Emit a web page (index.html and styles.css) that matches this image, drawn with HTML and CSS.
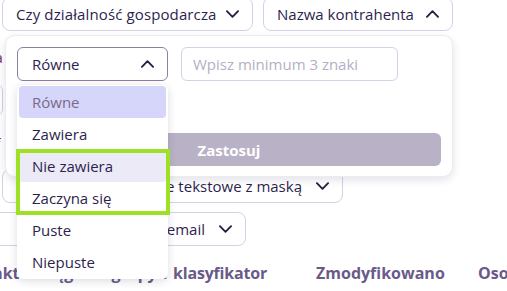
FILE: index.html
```html
<!DOCTYPE html>
<html lang="pl">
<head>
<meta charset="utf-8">
<link rel="stylesheet" href="styles.css">
</head>
<body>
<div class="page">
  <div class="filters">
    <div class="row row-top">
      <div class="btn btn-w1"><span class="wide">Czy działalność gospodarcza</span>
        <svg class="chev" viewBox="0 0 14 8"><polyline points="1,1 7,7 13,1"/></svg></div>
      <div class="btn btn-w2"><span>Nazwa kontrahenta</span>
        <svg class="chev" viewBox="0 0 14 8"><polyline points="1,7 7,1 13,7"/></svg></div>
    </div>
    <div class="row"><span class="cut-text red">Data</span></div>
    <div class="row"><div class="btn cut-btn"></div></div>
    <div class="row"><span class="cut-text f">Nip f</span></div>
    <div class="row">
      <div class="btn btn-mask"><span>Czy wypełnione pole tekstowe z maską</span>
        <svg class="chev" viewBox="0 0 14 8"><polyline points="1,1 7,7 13,1"/></svg></div>
    </div>
    <div class="row">
      <div class="btn btn-email"><span>Telefon albo adres email</span>
        <svg class="chev" viewBox="0 0 14 8"><polyline points="1,1 7,7 13,1"/></svg></div>
    </div>
  </div>
  <div class="thead">
    <span class="th th1">Kontaktowe</span>
    <span class="th th2">Księgowe grupy i klasyfikator</span>
    <span class="th th3">Zmodyfikowano</span>
    <span class="th th4">Osoba</span>
  </div>

  <div class="popover">
    <div class="pop-row">
      <div class="select"><span>Równe</span>
        <svg class="chev" viewBox="0 0 14 8"><polyline points="1,7 7,1 13,7"/></svg></div>
      <div class="input">Wpisz minimum 3 znaki</div>
    </div>
    <div class="apply">Zastosuj</div>
  </div>

  <div class="listbox">
    <div class="opt selected">Równe</div>
    <div class="opt">Zawiera</div>
    <div class="opt hover">Nie zawiera</div>
    <div class="opt">Zaczyna się</div>
    <div class="opt">Puste</div>
    <div class="opt">Niepuste</div>
    <div class="mark"></div>
  </div>
</div>
</body>
</html>
```
FILE: styles.css
```css
* { box-sizing: border-box; }
html, body { margin: 0; padding: 0; background: #fff; }
body {
  font-family: "Open Sans", "Noto Sans", sans-serif;
  font-size: 15px;
  color: #2d1f4e;
  overflow: hidden;
  width: 507px;
  height: 291px;
}
.page { position: relative; width: 507px; height: 291px; overflow: hidden; }

.filters { display: flex; flex-direction: column; gap: 9px; margin-top: -3px; }
.row { display: flex; gap: 10px; height: 34px; align-items: center; padding-left: 2px; }

.btn {
  display: flex; align-items: center; justify-content: space-between;
  height: 34px; border: 1px solid #d4d1e7; border-radius: 8px;
  padding: 0 13px 0 13px; background: #fff; white-space: nowrap;
  color: #2d1f4e; flex: none;
}
.wide { letter-spacing: 0.12px; }
.btn-w1 { width: 251px; }
.btn-w2 { width: 190px; }
.btn-mask { width: 341px; justify-content: flex-end; gap: 14px; overflow: hidden; }
.btn-email { width: 290px; margin-left: -46px; justify-content: flex-end; gap: 14px; overflow: hidden; }
.cut-btn { width: 40px; margin-left: -39px; }
.cut-text { margin-left: -32px; white-space: nowrap; }
.cut-text.red { color: #7b2f5c; }
.cut-text.f { color: #2c3c8c; margin-left: -35px; }

.chev { width: 13px; height: 8px; flex: none; }
.chev polyline { fill: none; stroke: #2a1a44; stroke-width: 2; stroke-linecap: round; stroke-linejoin: round; }

.thead {
  display: flex; margin-top: 18px; margin-left: -45px; height: 18px; align-items: center;
  font-weight: 700; color: #6a5a8a; white-space: nowrap; font-size: 16px;
}
.th { flex: none; display: flex; }
.th1 { width: 95px; }
.th2 { width: 266px; justify-content: flex-end; padding-right: 49px; letter-spacing: -0.2px; word-spacing: 2px; }
.th3 { width: 162px; }

.popover {
  position: absolute; left: 5px; top: 35px; width: 448px; height: 142px;
  background: #fff; border: 1px solid #ecebf3; border-radius: 10px;
  box-shadow: 0 3px 8px rgba(40, 30, 70, 0.13);
  padding: 11px 11px 10px 11px;
  display: flex; flex-direction: column; justify-content: space-between;
}
.pop-row { display: flex; gap: 13px; }
.select {
  width: 151px; height: 34px; border: 1px solid #8b7fa3; border-radius: 6px;
  display: flex; align-items: center; justify-content: space-between;
  padding: 0 13px 0 14px;
}
.input {
  width: 217px; height: 34px; border: 1px solid #d4d1e7; border-radius: 6px;
  display: flex; align-items: center; padding-left: 11px; color: #b5afc3;
}
.apply {
  height: 33px; border-radius: 6px; background: #b9b1c6; color: #fff;
  font-weight: 700; display: flex; align-items: center; justify-content: center;
}

.listbox {
  position: absolute; left: 17px; top: 85px; width: 151px; height: 194px;
  background: #fff; border-radius: 6px; padding: 1px 2px;
  box-shadow: 0 2px 8px rgba(40, 30, 70, 0.16);
}
.opt {
  height: 32px; display: flex; align-items: center; padding-left: 13px;
  border-radius: 4px; color: #2d1f4e; white-space: nowrap;
}
.opt.selected { background: #d5d6f9; color: #7a6a8c; }
.opt.hover { background: #ebeaf6; }
.mark {
  position: absolute; left: -1px; top: 64px; width: 154px; height: 66px;
  border: 4px solid #9ee026;
}
```
